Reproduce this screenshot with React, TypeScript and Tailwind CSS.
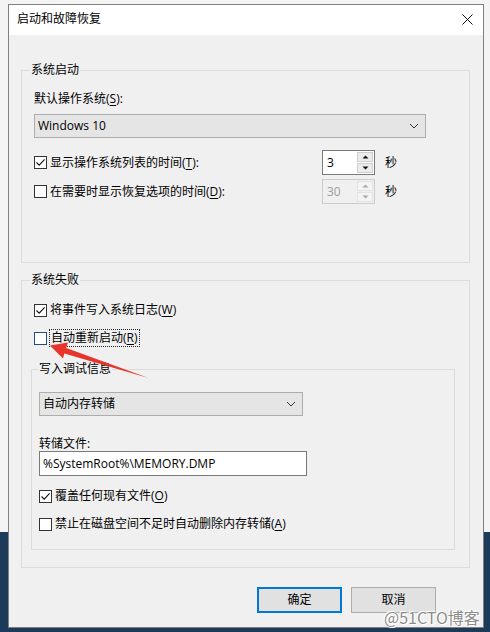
import React from 'react';

// Windows 10 "启动和故障恢复" dialog

const Check = ({ checked, hover }: { checked?: boolean; hover?: boolean }) => (
  <span
    className={`flex h-[13px] w-[13px] shrink-0 items-center justify-center border bg-white ${
      hover ? 'border-[#1f4f80]' : 'border-[#333333]'
    }`}
  >
    {checked && (
      <svg width="11" height="11" viewBox="0 0 11 11">
        <path d="M1.5 5.5 L4.2 8.2 L9.6 2.4" fill="none" stroke="#111" strokeWidth="1.1" />
      </svg>
    )}
  </span>
);

const U = ({ children }: { children: React.ReactNode }) => (
  <span className="underline underline-offset-[2px]">{children}</span>
);

const Chevron = () => (
  <svg width="10" height="6" viewBox="0 0 10 6">
    <path d="M1 1 L5 5 L9 1" fill="none" stroke="#333" strokeWidth="1" />
  </svg>
);

const Spin = ({ value, disabled }: { value: string; disabled?: boolean }) => {
  const arrow = disabled ? '#a8a8a8' : '#111';
  return (
    <div
      className={`flex h-[25px] w-[53px] border ${
        disabled ? 'border-[#cccccc] text-[#9d9d9d]' : 'border-[#7a7a7a] bg-white text-black'
      }`}
    >
      <div className="flex flex-1 items-center pl-[4px]">{value}</div>
      <div className="flex w-[17px] flex-col gap-[1px] py-[1px] pr-[1px]">
        <div
          className={`flex flex-1 items-center justify-center border ${
            disabled ? 'border-[#e3e3e3] bg-[#f4f4f4]' : 'border-[#cfcfcf] bg-[#ececec]'
          }`}
        >
          <svg width="7" height="4" viewBox="0 0 7 4">
            <path d="M0.5 3.5 L3.5 0.5 L6.5 3.5 Z" fill={arrow} />
          </svg>
        </div>
        <div
          className={`flex flex-1 items-center justify-center border ${
            disabled ? 'border-[#e3e3e3] bg-[#f4f4f4]' : 'border-[#cfcfcf] bg-[#ececec]'
          }`}
        >
          <svg width="7" height="4" viewBox="0 0 7 4">
            <path d="M0.5 0.5 L3.5 3.5 L6.5 0.5 Z" fill={arrow} />
          </svg>
        </div>
      </div>
    </div>
  );
};

const Combo = ({ text, width, pl }: { text: string; width: string; pl: string }) => (
  <div
    className={`flex h-[24px] items-center justify-between border border-[#adadad] bg-[#e5e5e5] pr-[6px] ${width} ${pl}`}
  >
    <span>{text}</span>
    <Chevron />
  </div>
);

const App: React.FC = () => {
  return (
    <div className="relative h-[632px] w-[490px] overflow-hidden bg-[linear-gradient(to_bottom,#f4f4f4_532px,#1c3a5a_532px)] font-['Open_Sans','Noto_Sans_CJK_SC',sans-serif] text-[12px] leading-[16px] text-black">
      {/* dialog window */}
      <div className="absolute left-[8px] top-[4px] flex h-[624px] w-[476px] flex-col border border-[#7f7f7f] bg-[#f0f0f0]">
        <div className="flex h-[30px] shrink-0 items-center justify-between bg-white pb-[2px] pl-[8px] pr-[10px]">
          <span>启动和故障恢复</span>
          <svg width="11" height="11" viewBox="0 0 11 11">
            <path d="M0.5 0.5 L10.5 10.5 M10.5 0.5 L0.5 10.5" stroke="#111" strokeWidth="1" />
          </svg>
        </div>

        <div className="flex flex-col pl-[12px] pr-[13px] pt-[27px]">
          {/* 系统启动 */}
          <fieldset className="h-[201px] border border-[#dcdcdc] px-[12px] pt-[13px]">
            <legend className="ml-[-4px] px-[1px]">系统启动</legend>
            <div>
              默认操作系统(<U>S</U>):
            </div>
            <div className="mt-[7px]">
              <Combo text="Windows 10" width="w-[392px]" pl="pl-[3px]" />
            </div>
            <div className="mt-[12px] flex flex-col gap-[4px]">
              <div className="flex h-[25px] items-center">
                <div className="flex w-[288px] items-center gap-[3px]">
                  <Check checked />
                  <span>
                    显示操作系统列表的时间(<U>T</U>):
                  </span>
                </div>
                <Spin value="3" />
                <span className="ml-[10px]">秒</span>
              </div>
              <div className="flex h-[25px] items-center">
                <div className="flex w-[288px] items-center gap-[3px]">
                  <Check />
                  <span>
                    在需要时显示恢复选项的时间(<U>D</U>):
                  </span>
                </div>
                <Spin value="30" disabled />
                <span className="ml-[10px]">秒</span>
              </div>
            </div>
          </fieldset>

          {/* 系统失败 */}
          <fieldset className="mt-[9px] h-[296px] border border-[#dcdcdc] pl-[10px] pt-[13px]">
            <legend className="ml-[-2px] px-[1px]">系统失败</legend>
            <div className="flex h-[18px] items-center gap-[3px] pl-[2px]">
              <Check checked />
              <span>
                将事件写入系统日志(<U>W</U>)
              </span>
            </div>
            <div className="mt-[10px] flex h-[18px] items-center gap-[2px] pl-[2px]">
              <Check hover />
              <span className="border border-dotted border-[#222] px-[1px] leading-[16px]">
                自动重新启动(<U>R</U>)
              </span>
            </div>

            {/* 写入调试信息 */}
            <fieldset className="ml-[-1px] mt-[14px] h-[189px] w-[424px] border border-[#dcdcdc] pl-[7px] pt-[15px]">
              <legend className="ml-[-1px] px-[1px]">写入调试信息</legend>
              <Combo text="自动内存转储" width="w-[264px]" pl="pl-[3px]" />
              <div className="mt-[21px] leading-[14px]">转储文件:</div>
              <div className="flex h-[25px] w-[268px] items-center border border-[#7a7a7a] bg-white pl-[3px]">
                %SystemRoot%\MEMORY.DMP
              </div>
              <div className="mt-[11px] flex h-[18px] items-center gap-[3px]">
                <Check checked />
                <span>
                  覆盖任何现有文件(<U>O</U>)
                </span>
              </div>
              <div className="mt-[10px] flex h-[18px] items-center gap-[3px]">
                <Check />
                <span>
                  禁止在磁盘空间不足时自动删除内存转储(<U>A</U>)
                </span>
              </div>
            </fieldset>
          </fieldset>
        </div>

        <div className="mt-[19px] flex justify-end gap-[9px] pr-[47px]">
          <button className="flex h-[26px] w-[85px] items-center justify-center border-2 border-[#0078d7] bg-[#e1e1e1]">
            确定
          </button>
          <button className="flex h-[26px] w-[85px] items-center justify-center border border-[#adadad] bg-[#e1e1e1]">
            取消
          </button>
        </div>
      </div>

      {/* red annotation arrow */}
      <svg className="pointer-events-none absolute left-0 top-0" width="490" height="632" viewBox="0 0 490 632">
        <path
          d="M50 345.5 L68 342.5 L66.2 348 L148.5 378 L64.3 353.6 L63 358.5 Z"
          fill="#e8352b"
        />
      </svg>

      {/* watermark */}
      <div className="pointer-events-none absolute left-[384px] top-[607px] font-['Noto_Sans_CJK_SC',sans-serif] text-[16px] leading-[20px] text-[#8c8c8c] [text-shadow:0_0_1px_#fff,0_0_2px_#fff,1px_1px_0_#fff,-1px_-1px_0_#fff]">
        @51CTO博客
      </div>
    </div>
  );
};

export default App;
